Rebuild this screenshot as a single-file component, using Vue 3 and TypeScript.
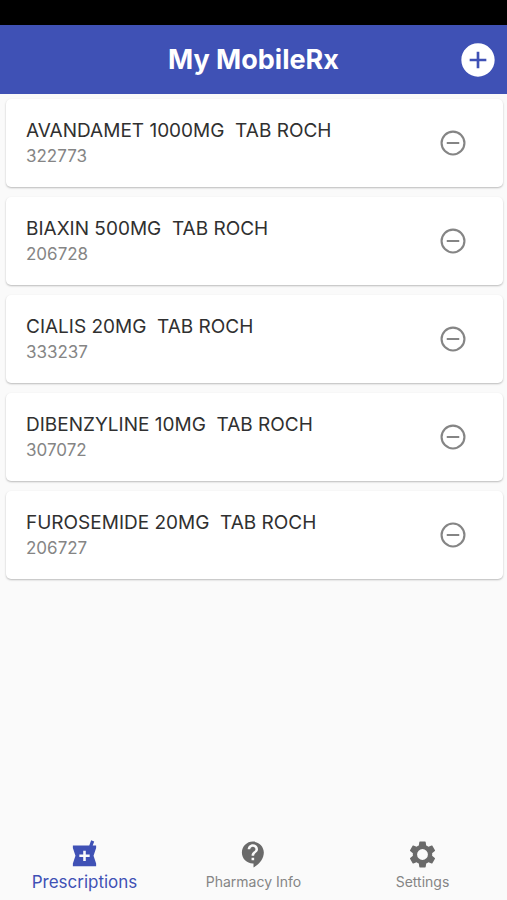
<script setup lang="ts">
import { ref } from 'vue'

interface Prescription {
  name: string
  number: string
}

interface Tab {
  id: string
  label: string
  icon: string
}

const prescriptions = ref<Prescription[]>([
  { name: 'AVANDAMET 1000MG  TAB ROCH', number: '322773' },
  { name: 'BIAXIN 500MG  TAB ROCH', number: '206728' },
  { name: 'CIALIS 20MG  TAB ROCH', number: '333237' },
  { name: 'DIBENZYLINE 10MG  TAB ROCH', number: '307072' },
  { name: 'FUROSEMIDE 20MG  TAB ROCH', number: '206727' },
])

const tabs: Tab[] = [
  {
    id: 'prescriptions',
    label: 'Prescriptions',
    icon: 'M16 14h-3v3h-2v-3H8v-2h3V9h2v3h3v2zm5-9h-2.64l1.14-3.14L17.15 1l-1.46 4H3v2l2 6-2 6v2h18v-2l-2-6 2-6V5z',
  },
  {
    id: 'pharmacy',
    label: 'Pharmacy Info',
    icon: 'M11.5 2C6.81 2 3 5.81 3 10.5S6.81 19 11.5 19h.5v3c4.86-2.34 8-7 8-11.5C20 5.81 16.19 2 11.5 2zm1 14.5h-2v-2h2v2zm0-3.5h-2c0-3.25 3-3 3-5 0-1.1-.9-2-2-2s-2 .9-2 2h-2c0-2.21 1.79-4 4-4s4 1.79 4 4c0 2.5-3 2.75-3 5z',
  },
  {
    id: 'settings',
    label: 'Settings',
    icon: 'M19.43 12.98c.04-.32.07-.64.07-.98s-.03-.66-.07-.98l2.11-1.65c.19-.15.24-.42.12-.64l-2-3.46c-.12-.22-.39-.3-.61-.22l-2.49 1c-.52-.4-1.08-.73-1.69-.98l-.38-2.65C14.46 2.18 14.25 2 14 2h-4c-.25 0-.46.18-.49.42l-.38 2.65c-.61.25-1.17.59-1.69.98l-2.49-1c-.23-.09-.49 0-.61.22l-2 3.46c-.13.22-.07.49.12.64l2.11 1.65c-.04.32-.07.65-.07.98s.03.66.07.98l-2.11 1.65c-.19.15-.24.42-.12.64l2 3.46c.12.22.39.3.61.22l2.49-1c.52.4 1.08.73 1.69.98l.38 2.65c.03.24.24.42.49.42h4c.25 0 .46-.18.49-.42l.38-2.65c.61-.25 1.17-.59 1.69-.98l2.49 1c.23.09.49 0 .61-.22l2-3.46c.12-.22.07-.49-.12-.64l-2.11-1.65zM12 16.2a4.2 4.2 0 1 1 0-8.4 4.2 4.2 0 0 1 0 8.4z',
  },
]

const activeTab = ref<string>('prescriptions')

function remove(item: Prescription): void {
  prescriptions.value = prescriptions.value.filter((p) => p !== item)
}
</script>

<template>
  <div class="app">
    <div class="status-bar"></div>
    <header class="header">
      <h1 class="title">My MobileRx</h1>
      <button class="add" type="button" aria-label="Add prescription">
        <svg viewBox="0 0 24 24" width="40" height="40" aria-hidden="true">
          <path d="M12 2C6.48 2 2 6.48 2 12s4.48 10 10 10 10-4.48 10-10S17.52 2 12 2zm5 10.8h-4.2V17h-1.6v-4.2H7v-1.6h4.2V7h1.6v4.2H17v1.6z" />
        </svg>
      </button>
    </header>

    <main class="content">
      <ul class="list">
        <li v-for="item in prescriptions" :key="item.name" class="card">
          <div class="info">
            <h2 class="name">{{ item.name }}</h2>
            <p class="number">{{ item.number }}</p>
          </div>
          <button class="remove" type="button" :aria-label="`Remove ${item.name}`" @click="remove(item)">
            <svg viewBox="0 0 24 24" width="30" height="30" aria-hidden="true">
              <path d="M7 11.2v1.6h10v-1.6H7zM12 2a10 10 0 1 0 0 20 10 10 0 0 0 0-20zm0 18.3a8.3 8.3 0 1 1 0-16.6 8.3 8.3 0 0 1 0 16.6z" />
            </svg>
          </button>
        </li>
      </ul>
    </main>

    <nav class="tabs">
      <button
        v-for="tab in tabs"
        :key="tab.id"
        type="button"
        class="tab"
        :class="{ active: tab.id === activeTab }"
        @click="activeTab = tab.id"
      >
        <svg viewBox="0 0 24 24" width="31" height="31" aria-hidden="true">
          <path :d="tab.icon" />
        </svg>
        <span class="label">{{ tab.label }}</span>
      </button>
    </nav>
  </div>
</template>

<style>
body {
  background: #fafafa;
}
</style>

<style scoped>
.app {
  display: flex;
  flex-direction: column;
  min-height: 100vh;
  background: #fafafa;
  font-family: Inter, Roboto, 'Liberation Sans', sans-serif;
}

button {
  margin: 0;
  padding: 0;
  border: 0;
  background: none;
  font: inherit;
  cursor: pointer;
}

svg {
  display: block;
  fill: currentColor;
}

.status-bar {
  height: 25px;
  background: #000;
}

.header {
  display: grid;
  grid-template-columns: 40px 1fr 40px;
  align-items: center;
  padding: 15px 9px 14px;
  background: #3f51b5;
  color: #fff;
}

.title {
  grid-column: 2;
  margin: 0;
  font-size: 27px;
  font-weight: 700;
  line-height: 40px;
  text-align: center;
}

.add {
  color: #fff;
}

.content {
  flex: 1;
  padding: 5px 4px 5px 6px;
}

.list {
  display: flex;
  flex-direction: column;
  gap: 10px;
  margin: 0;
  padding: 0;
  list-style: none;
}

.card {
  display: flex;
  align-items: center;
  justify-content: space-between;
  padding: 19px 35px 19px 20px;
  border-radius: 5px;
  background: #fff;
  box-shadow: 0 1px 2px rgba(0, 0, 0, 0.26);
}

.name {
  margin: 0;
  color: #303030;
  font-size: 19px;
  font-weight: 400;
  line-height: 26px;
  white-space: pre-wrap;
}

.number {
  margin: 0;
  color: #858585;
  font-size: 17px;
  line-height: 24px;
}

.remove {
  color: #858585;
}

.tabs {
  display: grid;
  grid-template-columns: repeat(3, 1fr);
  padding: 8px 0;
}

.tab {
  display: flex;
  flex-direction: column;
  align-items: center;
  justify-content: flex-end;
  gap: 2px;
  color: #6a6a6a;
}

.label {
  color: #858585;
  font-size: 14px;
  line-height: 20px;
}

.active,
.active .label {
  color: #3f51b5;
}

.active .label {
  font-size: 17px;
}
</style>
